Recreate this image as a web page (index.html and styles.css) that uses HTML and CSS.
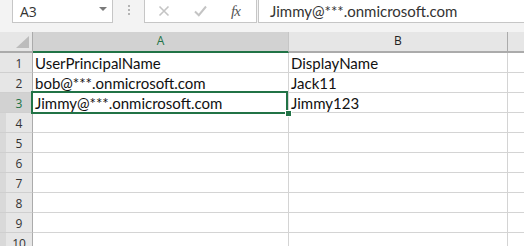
FILE: index.html
```html
<!DOCTYPE html>
<html lang="en">
<head>
	<meta charset="UTF-8">
	<meta name="viewport" content="width=device-width, initial-scale=1.0">
	<title>Book1 - Excel</title>

	<link rel="stylesheet" href="styles.css">

</head>
<body>

	<div class="toolbar">
		<div class="namebox">
			<span class="namebox-text">A3</span>
			<span class="namebox-arrow"></span>
		</div>
		<div class="grip">
			<span></span><span></span><span></span>
		</div>
		<div class="fnbox">
			<svg class="fn-icon" width="12" height="12" viewBox="0 0 12 12">
				<path d="M1.5 1.5 L10.5 10.5 M10.5 1.5 L1.5 10.5" stroke="#c4c4c4" stroke-width="1.6" fill="none"/>
			</svg>
			<svg class="fn-icon" width="13" height="12" viewBox="0 0 13 12">
				<path d="M1 6.5 L4.8 10.2 L12 1.5" stroke="#c4c4c4" stroke-width="2" fill="none"/>
			</svg>
			<span class="fx">fx</span>
		</div>
		<div class="formula">Jimmy@***.onmicrosoft.com</div>
	</div>

	<div class="sheet">
		<div class="corner"><span class="corner-tri"></span></div>
		<div class="colhead colhead-active">A</div>
		<div class="colhead">B</div>
		<div class="colhead colhead-rest"></div>

		<div class="rowhead">1</div>
		<div class="cell">UserPrincipalName</div>
		<div class="cell">DisplayName</div>
		<div class="cell"></div>

		<div class="rowhead">2</div>
		<div class="cell">bob@***.onmicrosoft.com</div>
		<div class="cell">Jack11</div>
		<div class="cell"></div>

		<div class="rowhead rowhead-active">3</div>
		<div class="cell cell-active">Jimmy@***.onmicrosoft.com</div>
		<div class="cell">Jimmy123</div>
		<div class="cell"></div>

		<div class="rowhead rowhead-edge">4</div>
		<div class="cell"></div>
		<div class="cell"></div>
		<div class="cell"></div>

		<div class="rowhead rowhead-edge">5</div>
		<div class="cell"></div>
		<div class="cell"></div>
		<div class="cell"></div>

		<div class="rowhead rowhead-edge">6</div>
		<div class="cell"></div>
		<div class="cell"></div>
		<div class="cell"></div>

		<div class="rowhead rowhead-edge">7</div>
		<div class="cell"></div>
		<div class="cell"></div>
		<div class="cell"></div>

		<div class="rowhead rowhead-edge">8</div>
		<div class="cell"></div>
		<div class="cell"></div>
		<div class="cell"></div>

		<div class="rowhead rowhead-edge">9</div>
		<div class="cell"></div>
		<div class="cell"></div>
		<div class="cell"></div>

		<div class="rowhead rowhead-edge">10</div>
		<div class="cell"></div>
		<div class="cell"></div>
		<div class="cell"></div>
	</div>

</body>
</html>
```

FILE: styles.css
```css
html, body {
	margin: 0;
	padding: 0;
	overflow: hidden;
	background: #ffffff;
}
body {
	font-family: "Lato", "Liberation Sans", sans-serif;
}

/* formula bar */
.toolbar {
	display: flex;
	align-items: flex-start;
	height: 32px;
	padding-left: 12px;
	background: #f3f3f3;
}
.namebox {
	display: flex;
	align-items: center;
	justify-content: space-between;
	box-sizing: border-box;
	width: 101px;
	height: 24px;
	margin-top: -1px;
	padding: 1px 5px 0 7px;
	background: #fff;
	border: 1px solid #c6c6c6;
	font-family: "Open Sans", sans-serif;
	font-size: 14px;
	color: #333;
}
.namebox-arrow {
	width: 0;
	height: 0;
	margin-top: -5px;
	border-left: 4px solid transparent;
	border-right: 4px solid transparent;
	border-top: 4px solid #7a7a7a;
}
.grip {
	display: flex;
	flex-direction: column;
	align-items: center;
	gap: 2px;
	width: 31px;
	padding-top: 5px;
}
.grip span {
	width: 2px;
	height: 2px;
	background: #b4b4b4;
}
.fnbox {
	display: flex;
	align-items: center;
	box-sizing: border-box;
	width: 113px;
	height: 24px;
	margin-top: -1px;
	padding: 0 0 0 13px;
	background: #fff;
	border: 1px solid #c6c6c6;
}
.fn-icon {
	margin-right: 24px;
}
.fx {
	margin-left: 0;
	font-family: "Liberation Serif", serif;
	font-style: italic;
	font-size: 15px;
	color: #555;
	letter-spacing: -1px;
}
.formula {
	flex: 1;
	box-sizing: border-box;
	height: 24px;
	margin: -1px -2px 0 1px;
	padding: 3px 0 0 11px;
	background: #fff;
	border: 1px solid #c6c6c6;
	font-size: 15px;
	line-height: 17px;
	color: #333;
	white-space: nowrap;
}

/* grid */
.sheet {
	display: grid;
	grid-template-columns: 33px 256px 219px 1fr;
	grid-auto-rows: 20px;
	grid-template-rows: 21px;
}
.corner, .colhead {
	box-sizing: border-box;
	background: #e6e6e6;
	border-right: 1px solid #c6c6c6;
	border-bottom: 2px solid #ababab;
	font-family: "Open Sans", sans-serif;
	font-size: 12px;
	line-height: 18px;
	text-align: center;
	color: #222;
}
.corner {
	position: relative;
	border-right-color: #ababab;
}
.corner-tri {
	position: absolute;
	right: 3px;
	bottom: 3px;
	width: 13px;
	height: 12px;
	background: #bcbcbc;
	clip-path: polygon(100% 0, 100% 100%, 0 100%);
}
.colhead-active {
	background: #d2d2d2;
	border-bottom-color: #217346;
	color: #217346;
}
.colhead-active + .colhead {
	border-right-color: #ababab;
}
.colhead-rest {
	border-right: none;
}
.rowhead {
	box-sizing: border-box;
	padding-left: 6px;
	background: #e6e6e6;
	border-right: 1px solid #ababab;
	border-bottom: 1px solid #cfcfcf;
	font-family: "Open Sans", sans-serif;
	font-size: 12px;
	line-height: 21px;
	text-align: center;
	color: #333;
}
.rowhead-active {
	background: #d2d2d2;
	color: #217346;
}
.rowhead-edge {
	background: linear-gradient(to right, #d9d9d9 6px, #e6e6e6 6px);
}
.cell {
	box-sizing: border-box;
	padding-left: 2px;
	border-right: 1px solid #d4d4d4;
	border-bottom: 1px solid #d4d4d4;
	font-size: 15px;
	line-height: 20px;
	color: #111;
	white-space: nowrap;
	overflow: hidden;
}
.cell:nth-child(4n) {
	border-right: none;
}
.cell-active {
	position: relative;
	overflow: visible;
}
.cell-active::before {
	content: "";
	position: absolute;
	left: -2px;
	top: -2px;
	right: 0;
	bottom: -2px;
	border: 2px solid #217346;
}
.cell-active::after {
	content: "";
	position: absolute;
	right: -4px;
	bottom: -5px;
	width: 5px;
	height: 5px;
	background: #217346;
	border: 1px solid #fff;
}
```
